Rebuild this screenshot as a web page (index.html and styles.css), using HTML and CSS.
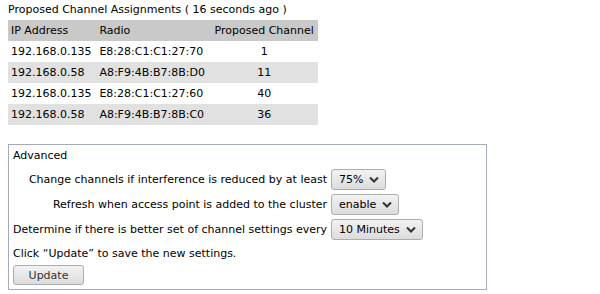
FILE: index.html
```html
<!DOCTYPE html>
<html lang="en">
<head>
    <meta charset="UTF-8">
    <title>Channel Management</title>
    <link rel="stylesheet" href="styles.css">
</head>
<body>
    <div class="caption">Proposed Channel Assignments ( 16 seconds ago )</div>
    <table class="assignments">
        <thead>
            <tr>
                <th class="ip">IP Address</th>
                <th class="radio">Radio</th>
                <th class="channel">Proposed Channel</th>
            </tr>
        </thead>
        <tbody>
            <tr>
                <td>192.168.0.135</td>
                <td>E8:28:C1:C1:27:70</td>
                <td class="channel">1</td>
            </tr>
            <tr class="alt">
                <td>192.168.0.58</td>
                <td>A8:F9:4B:B7:8B:D0</td>
                <td class="channel">11</td>
            </tr>
            <tr>
                <td>192.168.0.135</td>
                <td>E8:28:C1:C1:27:60</td>
                <td class="channel">40</td>
            </tr>
            <tr class="alt">
                <td>192.168.0.58</td>
                <td>A8:F9:4B:B7:8B:C0</td>
                <td class="channel">36</td>
            </tr>
        </tbody>
    </table>

    <div class="advanced">
        <div class="legend">Advanced</div>
        <table class="settings">
            <tr>
                <td class="label">Change channels if interference is reduced by at least</td>
                <td><div class="select">75%<svg viewBox="0 0 10 7"><path d="M1 1.5 L5 5.5 L9 1.5"/></svg></div></td>
            </tr>
            <tr>
                <td class="label">Refresh when access point is added to the cluster</td>
                <td><div class="select">enable<svg viewBox="0 0 10 7"><path d="M1 1.5 L5 5.5 L9 1.5"/></svg></div></td>
            </tr>
            <tr>
                <td class="label">Determine if there is better set of channel settings every</td>
                <td><div class="select">10 Minutes<svg viewBox="0 0 10 7"><path d="M1 1.5 L5 5.5 L9 1.5"/></svg></div></td>
            </tr>
        </table>
        <div class="note">Click &ldquo;Update&rdquo; to save the new settings.</div>
        <button class="update">Update</button>
    </div>
</body>
</html>
```

FILE: styles.css
```css
body {
    font-family: 'DejaVu Sans', Verdana, sans-serif;
    font-size: 11px;
    color: #000;
    margin: 0;
    padding: 0 8px;
    background: #fff;
}
.caption {
    height: 20px;
    line-height: 20px;
}
.assignments {
    border-collapse: collapse;
    width: 310px;
}
.assignments th,
.assignments td {
    height: 21px;
    padding: 0 3px;
    font-weight: normal;
    text-align: left;
    white-space: nowrap;
}
.assignments thead tr {
    background-color: #c9c9c9;
}
.assignments tr.alt {
    background-color: #e1e1e1;
}
.assignments .channel {
    text-align: center;
}
.advanced {
    margin-top: 19px;
    width: 469px;
    border: 1px solid #a4abbb;
    padding: 3px 4px 4px 4px;
}
.legend {
    line-height: 16px;
    margin-bottom: 3px;
}
.settings {
    border-collapse: collapse;
}
.settings td {
    padding: 0;
    height: 25px;
}
.settings .label {
    text-align: right;
    padding-right: 4px;
    white-space: nowrap;
}
.select {
    display: inline-flex;
    align-items: center;
    gap: 6px;
    height: 19px;
    padding: 0 6px 0 7px;
    border: 1px solid #adadad;
    border-radius: 3px;
    background: linear-gradient(#f2f2f2, #dcdcdc);
    vertical-align: middle;
}
.select svg {
    width: 10px;
    height: 7px;
    fill: none;
    stroke: #333;
    stroke-width: 2;
}
.note {
    margin-top: 4px;
    line-height: 16px;
}
.update {
    display: block;
    margin-top: 3px;
    width: 71px;
    height: 20px;
    font-family: inherit;
    font-size: 11px;
    color: #333;
    border: 1px solid #adadad;
    border-radius: 3px;
    background: linear-gradient(#f2f2f2, #dcdcdc);
}
```
